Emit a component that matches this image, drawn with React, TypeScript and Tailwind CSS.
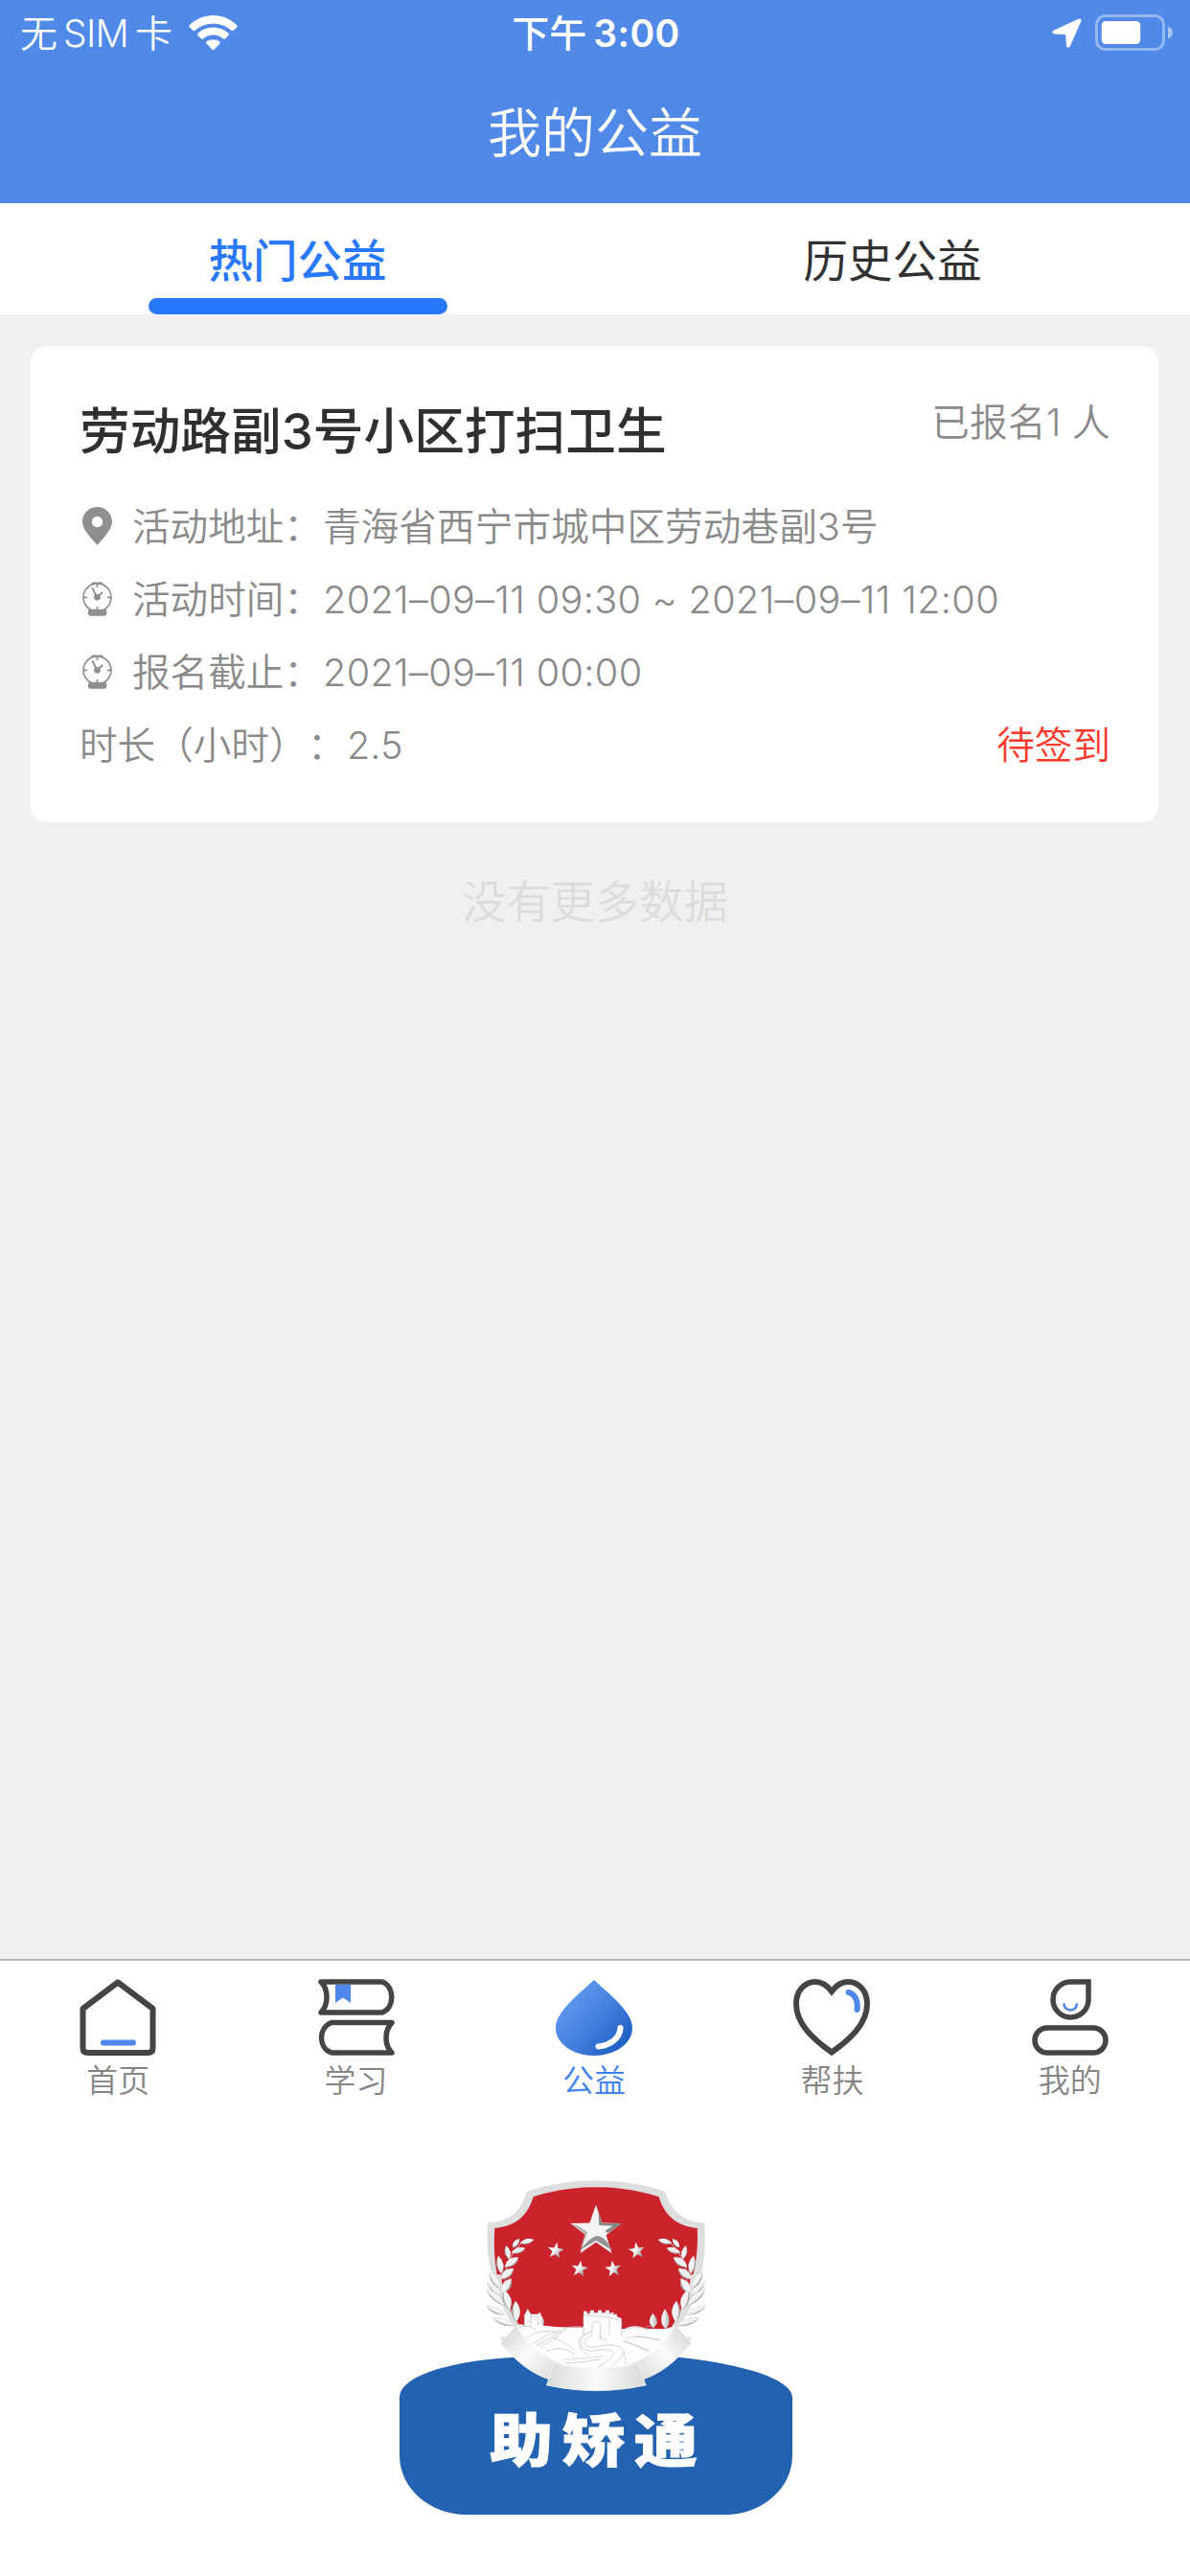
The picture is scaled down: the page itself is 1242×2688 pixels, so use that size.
import type { ReactNode } from "react";

const details = [
  { icon: "pin", label: "活动地址：", value: "青海省西宁市城中区劳动巷副3号" },
  { icon: "watch", label: "活动时间：", value: "2021–09–11 09:30 ~ 2021–09–11 12:00" },
  { icon: "watch", label: "报名截止：", value: "2021–09–11 00:00" },
];

function WifiIcon() {
  return (
    <svg width="51" height="37" viewBox="0 0 51 37" fill="#fff">
      <path d="M0.8 10.2Q-.2 11.3.8 12.3L4.4 15.9Q5.4 16.8 6.4 15.9C16.8 6.3 34.2 6.3 44.6 15.9Q45.6 16.8 46.6 15.9L50.2 12.3Q51.2 11.3 50.2 10.2C36-3.4 15-3.4.8 10.2Z" />
      <path d="M9.4 18.8Q8.4 19.8 9.4 20.8L13 24.4Q14 25.3 15 24.4C21 19.1 30 19.1 36 24.4Q37 25.3 38 24.4L41.6 20.8Q42.6 19.8 41.6 18.8C32.2 10.4 18.8 10.4 9.4 18.8Z" />
      <path d="M18.5 27.6Q17.7 28.5 18.6 29.4L24.6 35.8Q25.5 36.7 26.4 35.8L32.4 29.4Q33.3 28.5 32.5 27.6C28.5 24.4 22.5 24.4 18.5 27.6Z" />
    </svg>
  );
}

function LocationIcon() {
  return (
    <svg width="31" height="31" viewBox="0 0 31 31">
      <path d="M28.5 2.5L2.5 14.5L16 15L17 28.5Z" fill="#fff" stroke="#fff" strokeWidth="4" strokeLinejoin="round" />
    </svg>
  );
}

function BatteryIcon() {
  return (
    <svg width="82" height="38" viewBox="0 0 82 38">
      <rect x="1.5" y="1.5" width="70" height="35" rx="9" fill="none" stroke="#fff" strokeOpacity=".4" strokeWidth="3" />
      <rect x="6.7" y="7" width="40.5" height="24" rx="4.5" fill="#fff" />
      <path d="M76 12.5C82.5 14.5 82.5 23.5 76 25.5Z" fill="#fff" fillOpacity=".5" />
    </svg>
  );
}

function PinIcon() {
  return (
    <svg width="31" height="40" viewBox="0 0 31 40">
      <path
        fillRule="evenodd"
        fill="#8f8f8f"
        d="M15.5 0C24 0 31 6.5 31 15.5C31 24 21 33 15.5 40C10 33 0 24 0 15.5C0 6.5 7 0 15.5 0ZM15.5 9.8A5.7 5.7 0 1 0 15.5 21.2A5.7 5.7 0 1 0 15.5 9.8Z"
      />
    </svg>
  );
}

function WatchIcon() {
  return (
    <svg width="31" height="36" viewBox="0 0 93 108" fill="none" stroke="#8f8f8f" strokeWidth="5">
      <circle cx="46.5" cy="49" r="43.5" />
      <path d="M29 4.5H64" strokeWidth="6" />
      <path d="M46.5 6V18M46.5 78V90M3 49H15M78 49H90" />
      <path d="M31 19L43 44M50 45L63 33" strokeWidth="6" />
      <circle cx="46.5" cy="49" r="10" fill="#8f8f8f" stroke="none" />
      <rect x="18" y="86" width="58" height="21" rx="7" fill="#8f8f8f" stroke="none" />
    </svg>
  );
}

function HomeIcon() {
  return (
    <svg width="80" height="80" viewBox="0 0 80 80" fill="none" strokeWidth="6" strokeLinejoin="round" strokeLinecap="round">
      <path d="M40 3.5L76.500 31V72Q76.500 77 71.500 77H8.500Q3.500 77 3.500 72V31Z" stroke="#444" />
      <path d="M25 66.500H56" stroke="#4f88ea" />
    </svg>
  );
}

function StudyIcon() {
  return (
    <svg width="80" height="80" viewBox="0 0 80 80" fill="none" stroke="#444" strokeWidth="5.5" strokeLinejoin="round">
      <path d="M3 3H67C80 8 80 30 67 35H3C11 27 11 11 3 3Z" />
      <path d="M77 45.5H14C0 51 0 72 14 77H77C69 69 69 54 77 45.5Z" />
      <path d="M18 6H34V25L26 19.5L18 25Z" fill="#4f88ea" stroke="none" />
    </svg>
  );
}

function DropIcon() {
  return (
    <svg width="80" height="80" viewBox="0 0 80 80" fill="none">
      <defs>
        <linearGradient id="drop" x1="10" y1="22" x2="66" y2="74" gradientUnits="userSpaceOnUse">
          <stop stopColor="#5d97ee" />
          <stop offset=".5" stopColor="#437fdd" />
          <stop offset="1" stopColor="#1f60c4" />
        </linearGradient>
      </defs>
      <path d="M40 1C56 16 80 34 80 51C80 68 61 80 40 80S0 68 0 51C0 34 24 16 40 1Z" fill="url(#drop)" />
      <path d="M67.5 51C67 62 57 69 44.5 70.5" stroke="#fff" strokeWidth="6" strokeLinecap="round" />
    </svg>
  );
}

function HeartIcon() {
  return (
    <svg width="80" height="80" viewBox="0 0 80 80" fill="none" strokeWidth="6">
      <path d="M40 13C34 5 29 3 23 3C11 3 3 13 3 26C3 47 21 63 40 76.5C59 63 77 47 77 26C77 13 69 3 57 3C51 3 46 5 40 13Z" stroke="#444" />
      <path d="M57.5 14C64 15.5 68 23 66.5 32" stroke="#4f88ea" strokeLinecap="round" />
    </svg>
  );
}

function UserIcon() {
  return (
    <svg width="80" height="80" viewBox="0 0 80 80" fill="none" stroke="#444" strokeWidth="5.5">
      <path d="M40 3H59V22A18.5 18.5 0 1 1 40 3Z" />
      <rect x="3" y="51" width="74" height="26" rx="13" />
      <path d="M33.5 26.5A6.8 6.8 0 0 0 47 26.5" stroke="#4f88ea" strokeWidth="2.6" strokeLinecap="round" />
    </svg>
  );
}

const tabs: { label: string; icon: ReactNode; active?: boolean }[] = [
  { label: "首页", icon: <HomeIcon /> },
  { label: "学习", icon: <StudyIcon /> },
  { label: "公益", icon: <DropIcon />, active: true },
  { label: "帮扶", icon: <HeartIcon /> },
  { label: "我的", icon: <UserIcon /> },
];

// [cx, cy, length, width, angle]
const leaves = [
  [180, 237, 22, 8, -14],
  [146, 242, 17, 8, -52],
  [153, 265, 23, 9, -18],
  [119, 271, 22, 9, 78],
  [132, 302, 26, 12, -34],
  [95, 310, 29, 11, 80],
  [118, 338, 26, 13, -38],
  [79, 358, 30, 11, 56],
  [116, 376, 28, 13, -58],
  [78, 386, 32, 10, 42],
  [117, 420, 32, 13, 74],
  [82, 412, 38, 11, 42],
  [145, 456, 33, 13, 88],
  [82, 452, 34, 10, 25],
  [107, 488, 37, 11, 18],
  [110, 541, 15, 5, 12],
];

function starPoints(cx: number, cy: number, r: number) {
  return Array.from({ length: 10 }, (_, i) => {
    const a = (Math.PI / 5) * i - Math.PI / 2;
    const d = i % 2 ? r * 0.4 : r;
    return `${cx + d * Math.cos(a)},${cy + d * Math.sin(a)}`;
  }).join(" ");
}

function EmblemSide() {
  return (
    <g>
      <path d="M92 340Q100 440 150 502" fill="none" stroke="#dcdfde" strokeWidth="14" />
      <path d="M165 240C112 290 84 360 148 498" fill="none" stroke="#d0caca" strokeWidth="2.5" />
      {leaves.map(([x, y, l, w, a]) => (
        <g key={`${x}-${y}`} transform={`translate(${x} ${y}) rotate(${a})`}>
          <path d={`M${-l} 0Q0 ${-w * 2} ${l} 0Q0 ${w * 2} ${-l} 0Z`} fill="#a9abab" />
          <path d={`M${-l} 0Q0 ${-w * 2} ${l} 0Q0 ${w * 1.2} ${-l} 0Z`} fill="#f3f3f3" />
        </g>
      ))}
    </g>
  );
}

function Logo() {
  return (
    <svg width="410" height="350" viewBox="0 0 410 350">
      <defs>
        <linearGradient id="star" x1="0" y1="0" x2="1" y2=".7">
          <stop stopColor="#dcdcdc" />
          <stop offset=".5" stopColor="#fff" />
          <stop offset="1" stopColor="#8b8d8d" />
        </linearGradient>
        <linearGradient id="band">
          <stop stopColor="#d8dada" />
          <stop offset=".5" stopColor="#fbfbfb" />
          <stop offset="1" stopColor="#d8dada" />
        </linearGradient>
        <linearGradient id="fold" x1="0" y1="0" x2="1" y2=".8">
          <stop stopColor="#cfd1d1" />
          <stop offset=".5" stopColor="#fafafa" />
          <stop offset="1" stopColor="#dcdede" />
        </linearGradient>
        <linearGradient id="tree">
          <stop offset=".3" stopColor="#f2f2f2" />
          <stop offset="1" stopColor="#b4b6b6" />
        </linearGradient>
      </defs>
      <path
        d="M0 228C0 207 45 191 116 186Q205 176 294 186C365 194 410 210 410 228V288C410 323 378 350 340 350H70C32 350 0 323 0 288Z"
        fill="#2362b0"
      />
      <g transform="translate(73 -14) scale(.33333)">
        <path d="M180 80Q285 46 396 46T612 80C636 145 665 172 736 179Q742 290 722 350Q680 550 490 620H300Q120 560 74 345Q50 290 57 179C128 172 160 145 180 80Z" fill="#dcdfde" />
        <path d="M200 97Q290 67 396 67T593 97C610 155 650 190 713 195C722 330 670 450 630 510H155C100 420 70 330 79 195C145 190 183 155 200 97Z" fill="#cb232c" />

        <polygon points={starPoints(396, 206, 84)} fill="#f4f4f4" />
        <path d="M397 122L416 180L478 180L434 210L424 204L448 188L406 186L404 150Z" fill="#858686" />
        <path d="M318 181L362 214L346 264L354 248L370 208L340 188Z" fill="#b4b6b6" />
        <path d="M346 264L396 234L446 264L434 242Q415 216 396 220Q376 226 346 264Z" fill="#929494" />
        <g fill="url(#star)">
          <polygon points={starPoints(270, 266, 27)} transform="rotate(8 270 266)" />
          <polygon points={starPoints(345, 323, 27)} transform="rotate(8 345 323)" />
          <polygon points={starPoints(450, 323, 27)} transform="rotate(-8 450 323)" />
          <polygon points={starPoints(524, 266, 27)} transform="rotate(-8 524 266)" />
        </g>

        <EmblemSide />
        <g transform="translate(792 0) scale(-1 1)">
          <EmblemSide />
        </g>

        {/* hills and wall */}
        <path
          d="M148 502Q165 490 172 502V468L182 448L192 464H214L222 458L232 500Q300 508 357 505V455H368V463H378V452H390V460H402V452H414V460H426V452H438V462L450 458V466L462 464V472L476 478V516Q510 492 548 508Q600 520 644 500Q690 540 640 580L530 650H265L150 570Z"
          fill="#fefefe"
        />
        <g fill="url(#tree)">
          <path d="M574 462Q600 490 576 506Q552 490 574 462Z" />
          <path d="M612 448Q638 488 614 510Q588 488 612 448Z" />
          <path d="M226 470Q240 490 228 502Q214 490 226 470Z" />
        </g>
        <g fill="none" stroke="#bdbebe" strokeWidth="2">
          <path d="M172 502V468L182 450L192 466V502M192 472H216V500M178 486H190M200 482H212" />
          <path d="M357 528V468L438 474L476 486V535M438 474V532M359 468V455L370 462L382 454L394 464L406 455L418 464L430 455L440 466L452 460L464 474" />
          <path d="M383 526V505Q384 488 397 488T410 505V546M404 524L416 542L430 546" />
          <path d="M152 506Q190 494 206 514M180 538Q220 510 270 520M200 556Q240 528 275 518Q310 500 350 503M208 564Q250 540 288 518M222 568Q265 545 300 512M240 580Q290 560 330 590M260 538Q300 550 330 578" />
          <path d="M382 520C340 528 335 575 380 580C440 568 470 580 438 604Q420 620 402 632M372 522C320 538 350 590 372 592M386 530C350 545 350 568 390 568C450 552 495 566 480 592Q470 606 440 632" />
          <path d="M478 520Q520 490 562 516M490 540Q540 525 590 548M482 550Q520 560 566 578M480 545L560 582M484 586L490 624M548 514Q552 500 566 502T584 516M520 534L600 544" />
          <path d="M292 612Q296 600 304 608Q310 598 318 608Q324 597 332 607Q338 596 346 606Q352 595 360 605Q366 594 374 604Q380 593 388 602Q394 592 402 600Q408 591 416 598M300 618Q350 616 410 606" />
        </g>

        <path d="M146 500L98 554Q166 642 250 670L292 622Q198 588 146 500Z" fill="url(#fold)" />
        <path d="M146 500L98 554Q166 642 250 670L292 622Q198 588 146 500Z" fill="url(#fold)" transform="translate(792 0) scale(-1 1)" />
        <path d="M265 620Q396 644 529 620L553 687Q396 722 241 687Z" fill="url(#band)" stroke="#fff" strokeWidth="1.5" />
      </g>
      <text
        transform="translate(94 295) scale(1.1 1)"
        fill="#fff"
        stroke="#fff"
        strokeWidth="1"
        className="font-['Noto_Sans_CJK_SC',sans-serif] text-[60px] font-black tracking-[8.6px]"
      >
        助矫通
      </text>
    </svg>
  );
}

export default function App() {
  return (
    <div className="flex h-[2688px] w-[1242px] flex-col overflow-hidden bg-[#f0f0f0] font-[Inter,'Noto_Sans_CJK_SC',sans-serif] whitespace-nowrap">
      <header className="h-[212px] bg-[#5089e8] text-white">
        <div className="grid h-[68px] grid-cols-3 items-center pr-[17px] pl-[21px] text-[39px] leading-none">
          <div className="flex items-center font-[350]">
            <span>无</span>
            <span className="ml-[6px] tracking-[-0.7px]">SIM</span>
            <span className="ml-[7px]">卡</span>
            <span className="ml-[17px]">
              <WifiIcon />
            </span>
          </div>
          <div className="pr-[2px] text-center font-medium">
            下午<span className="ml-[7px] font-semibold tracking-[0.5px]">3:00</span>
          </div>
          <div className="flex items-center justify-end gap-[14px]">
            <LocationIcon />
            <BatteryIcon />
          </div>
        </div>
        <h1 className="pt-[43px] text-center text-[56px] leading-[56px] font-[350]">我的公益</h1>
      </header>

      <div className="grid h-[116px] grid-cols-2 bg-white text-center text-[46.5px]">
        <div className="flex flex-col items-center justify-between pt-[32px]">
          <span className="leading-[56px] font-medium text-[#2979ff]">热门公益</span>
          <div className="h-[17px] w-[312px] rounded-full bg-[#2979ff]" />
        </div>
        <div className="pt-[32px] leading-[56px] text-[#303133]">历史公益</div>
      </div>

      <main className="flex-1 px-8 pt-[33px]">
        <section className="h-[497px] w-[1177px] rounded-2xl bg-white pt-[51px] pr-[50px] pl-[51px] text-[39.6px] font-[350] text-[#8a8a8a]">
          <div className="flex items-start justify-between">
            <h2 className="text-[52.7px] leading-[76px] font-medium text-[#2d2f31]">劳动路副3号小区打扫卫生</h2>
            <span className="leading-[59px] tracking-[0.3px]">已报名1 人</span>
          </div>
          <div className="mt-[23px]">
            {details.map((row) => (
              <div key={row.label} className="flex h-[76px] items-center">
                <span className="w-[55px] pl-[3px]">{row.icon === "pin" ? <PinIcon /> : <WatchIcon />}</span>
                <span className="w-[199px] pt-[3px]">{row.label}</span>
                <span className={row.icon === "pin" ? "pt-[3px] tracking-[0.1px]" : "pt-[3px] tracking-[0.36px]"}>
                  {row.value}
                </span>
              </div>
            ))}
            <div className="flex h-[76px] items-center justify-between pt-[3px]">
              <div className="flex">
                <span className="w-[238px]">时长（小时）</span>
                <span className="w-[41px]">：</span>
                <span>2.5</span>
              </div>
              <span className="text-[#fa3a2d]">待签到</span>
            </div>
          </div>
        </section>
        <p className="mt-[55px] text-center text-[46.3px] leading-[56px] font-[350] text-[#dcdcdc]">没有更多数据</p>
      </main>

      <footer className="h-[644px] border-t-2 border-[#b9b9b9] bg-white">
        <nav className="mr-px -ml-px grid grid-cols-5 pt-[19px]">
          {tabs.map((tab) => (
            <div key={tab.label} className="flex flex-col items-center">
              {tab.icon}
              <span
                className={
                  tab.active
                    ? "mt-[6px] text-[33px] leading-[40px] font-[350] text-[#4080f0]"
                    : "mt-[6px] text-[33px] leading-[40px] font-[350] text-[#858585]"
                }
              >
                {tab.label}
              </span>
            </div>
          ))}
        </nav>
        <div className="mt-[83px] flex justify-center pl-[2px]">
          <Logo />
        </div>
      </footer>
    </div>
  );
}
